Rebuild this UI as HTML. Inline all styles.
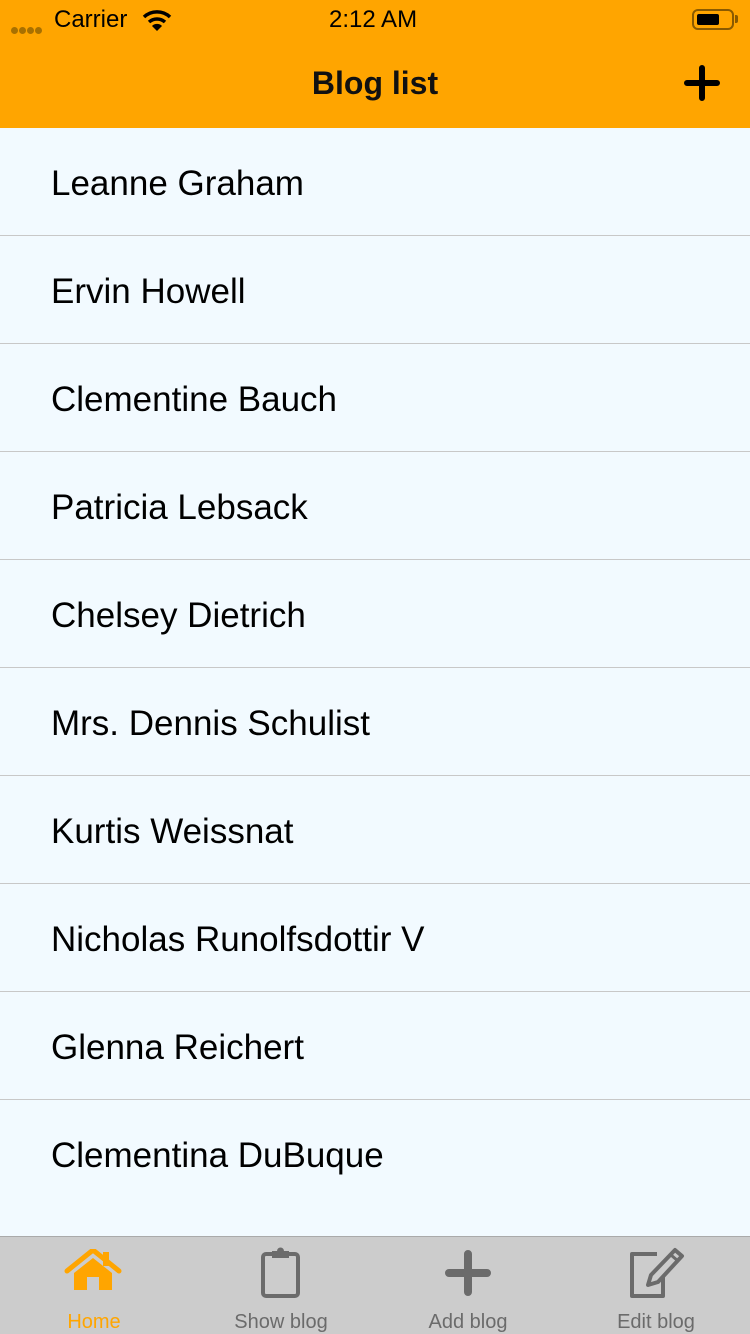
<!DOCTYPE html>
<html><head><meta charset="utf-8"><style>
*{margin:0;padding:0;box-sizing:border-box}
body{width:750px;height:1334px;overflow:hidden;background:#f2faff;font-family:"Liberation Sans",sans-serif;position:relative}
.hdr{position:absolute;top:0;left:0;width:750px;height:128px;background:#ffa500}
.sb{position:absolute;top:6px;font-size:24px;color:#000}
.title{position:absolute;top:65px;width:750px;text-align:center;font-size:32px;font-weight:bold;color:#111}
.row{position:absolute;left:0;width:750px;height:108px;border-bottom:1px solid #c8c8c8}
.row span{position:absolute;left:51px;top:36px;font-size:35px;color:#000}
.tab{position:absolute;top:1236px;left:0;width:750px;height:98px;background:#cccccc;border-top:1px solid #aaa}
.lbl{position:absolute;top:1311px;font-size:20px;color:#6b6b6b;text-align:center;width:180px}
.d{display:inline-block;width:7px;height:7px;border-radius:4px;background:#a87000;margin-right:1px}
</style></head><body>
<div class="hdr">
 <div style="position:absolute;left:11px;top:21px"><span class="d"></span><span class="d"></span><span class="d"></span><span class="d"></span></div>
 <div class="sb" style="left:54px">Carrier</div>
 <svg style="position:absolute;left:142px;top:9px" width="30" height="22" viewBox="0 0 30 22"><path d="M2 8 A19 19 0 0 1 28 8" stroke="#000" stroke-width="3.5" fill="none"/><path d="M7 13 A12 12 0 0 1 23 13" stroke="#000" stroke-width="3.5" fill="none"/><path d="M10 17 L15 22 L20 17 A7 7 0 0 0 10 17Z" fill="#000"/></svg>
 <div class="sb" style="left:329px">2:12 AM</div>
 <div style="position:absolute;left:692px;top:9px;width:42px;height:21px;border:2px solid #8a5a00;border-radius:6px"><div style="position:absolute;left:3px;top:3px;width:22px;height:11px;background:#000;border-radius:2px"></div></div>
 <div style="position:absolute;left:735px;top:15px;width:3px;height:8px;background:#8a5a00;border-radius:0 2px 2px 0"></div>
 <div class="title">Blog list</div>
 <svg style="position:absolute;left:684px;top:65px" width="36" height="36" viewBox="0 0 36 36"><path d="M18 3V33M3 18H33" stroke="#000" stroke-width="6" stroke-linecap="round"/></svg>
</div>
<div class="row" style="top:128px"><span>Leanne Graham</span></div>
<div class="row" style="top:236px"><span>Ervin Howell</span></div>
<div class="row" style="top:344px"><span>Clementine Bauch</span></div>
<div class="row" style="top:452px"><span>Patricia Lebsack</span></div>
<div class="row" style="top:560px"><span>Chelsey Dietrich</span></div>
<div class="row" style="top:668px"><span>Mrs. Dennis Schulist</span></div>
<div class="row" style="top:776px"><span>Kurtis Weissnat</span></div>
<div class="row" style="top:884px"><span>Nicholas Runolfsdottir V</span></div>
<div class="row" style="top:992px"><span>Glenna Reichert</span></div>
<div class="row" style="top:1100px;border:none"><span>Clementina DuBuque</span></div>
<div class="tab"></div>
<svg style="position:absolute;left:64px;top:1249px" width="58" height="42" viewBox="0 0 58 42"><path d="M3 22 L29 1 L55 22" stroke="#ffa500" stroke-width="5" fill="none" stroke-linecap="round" stroke-linejoin="round"/><rect x="39" y="3" width="6" height="14" fill="#ffa500"/><path d="M10 24 L29 9 L48 24 V41 H35 V28 H23 V41 H10Z" fill="#ffa500"/></svg>
<svg style="position:absolute;left:260px;top:1247px" width="42" height="52" viewBox="0 0 42 52"><rect x="3" y="7" width="35" height="42" rx="3" stroke="#6b6b6b" stroke-width="4" fill="none"/><rect x="12" y="4" width="17" height="7" fill="#6b6b6b"/><circle cx="20.5" cy="4" r="3.5" fill="#6b6b6b"/></svg>
<svg style="position:absolute;left:444px;top:1250px" width="48" height="46" viewBox="0 0 48 46"><path d="M24 4V42M5 23H43" stroke="#6b6b6b" stroke-width="8" stroke-linecap="round"/></svg>
<svg style="position:absolute;left:627px;top:1247px" width="60" height="53" viewBox="0 0 60 53"><path d="M30 7 H5 V49 H36 V30" stroke="#6b6b6b" stroke-width="4" fill="none" stroke-linejoin="round"/><path d="M48 3 L55 9 L31 35 L21 38 L24 28Z" stroke="#6b6b6b" stroke-width="4" fill="none" stroke-linejoin="round"/><path d="M44 8 L51 14" stroke="#6b6b6b" stroke-width="3"/></svg>
<div class="lbl" style="left:4px;color:#ffa500">Home</div>
<div class="lbl" style="left:191px">Show blog</div>
<div class="lbl" style="left:378px">Add blog</div>
<div class="lbl" style="left:566px">Edit blog</div>
</body></html>
